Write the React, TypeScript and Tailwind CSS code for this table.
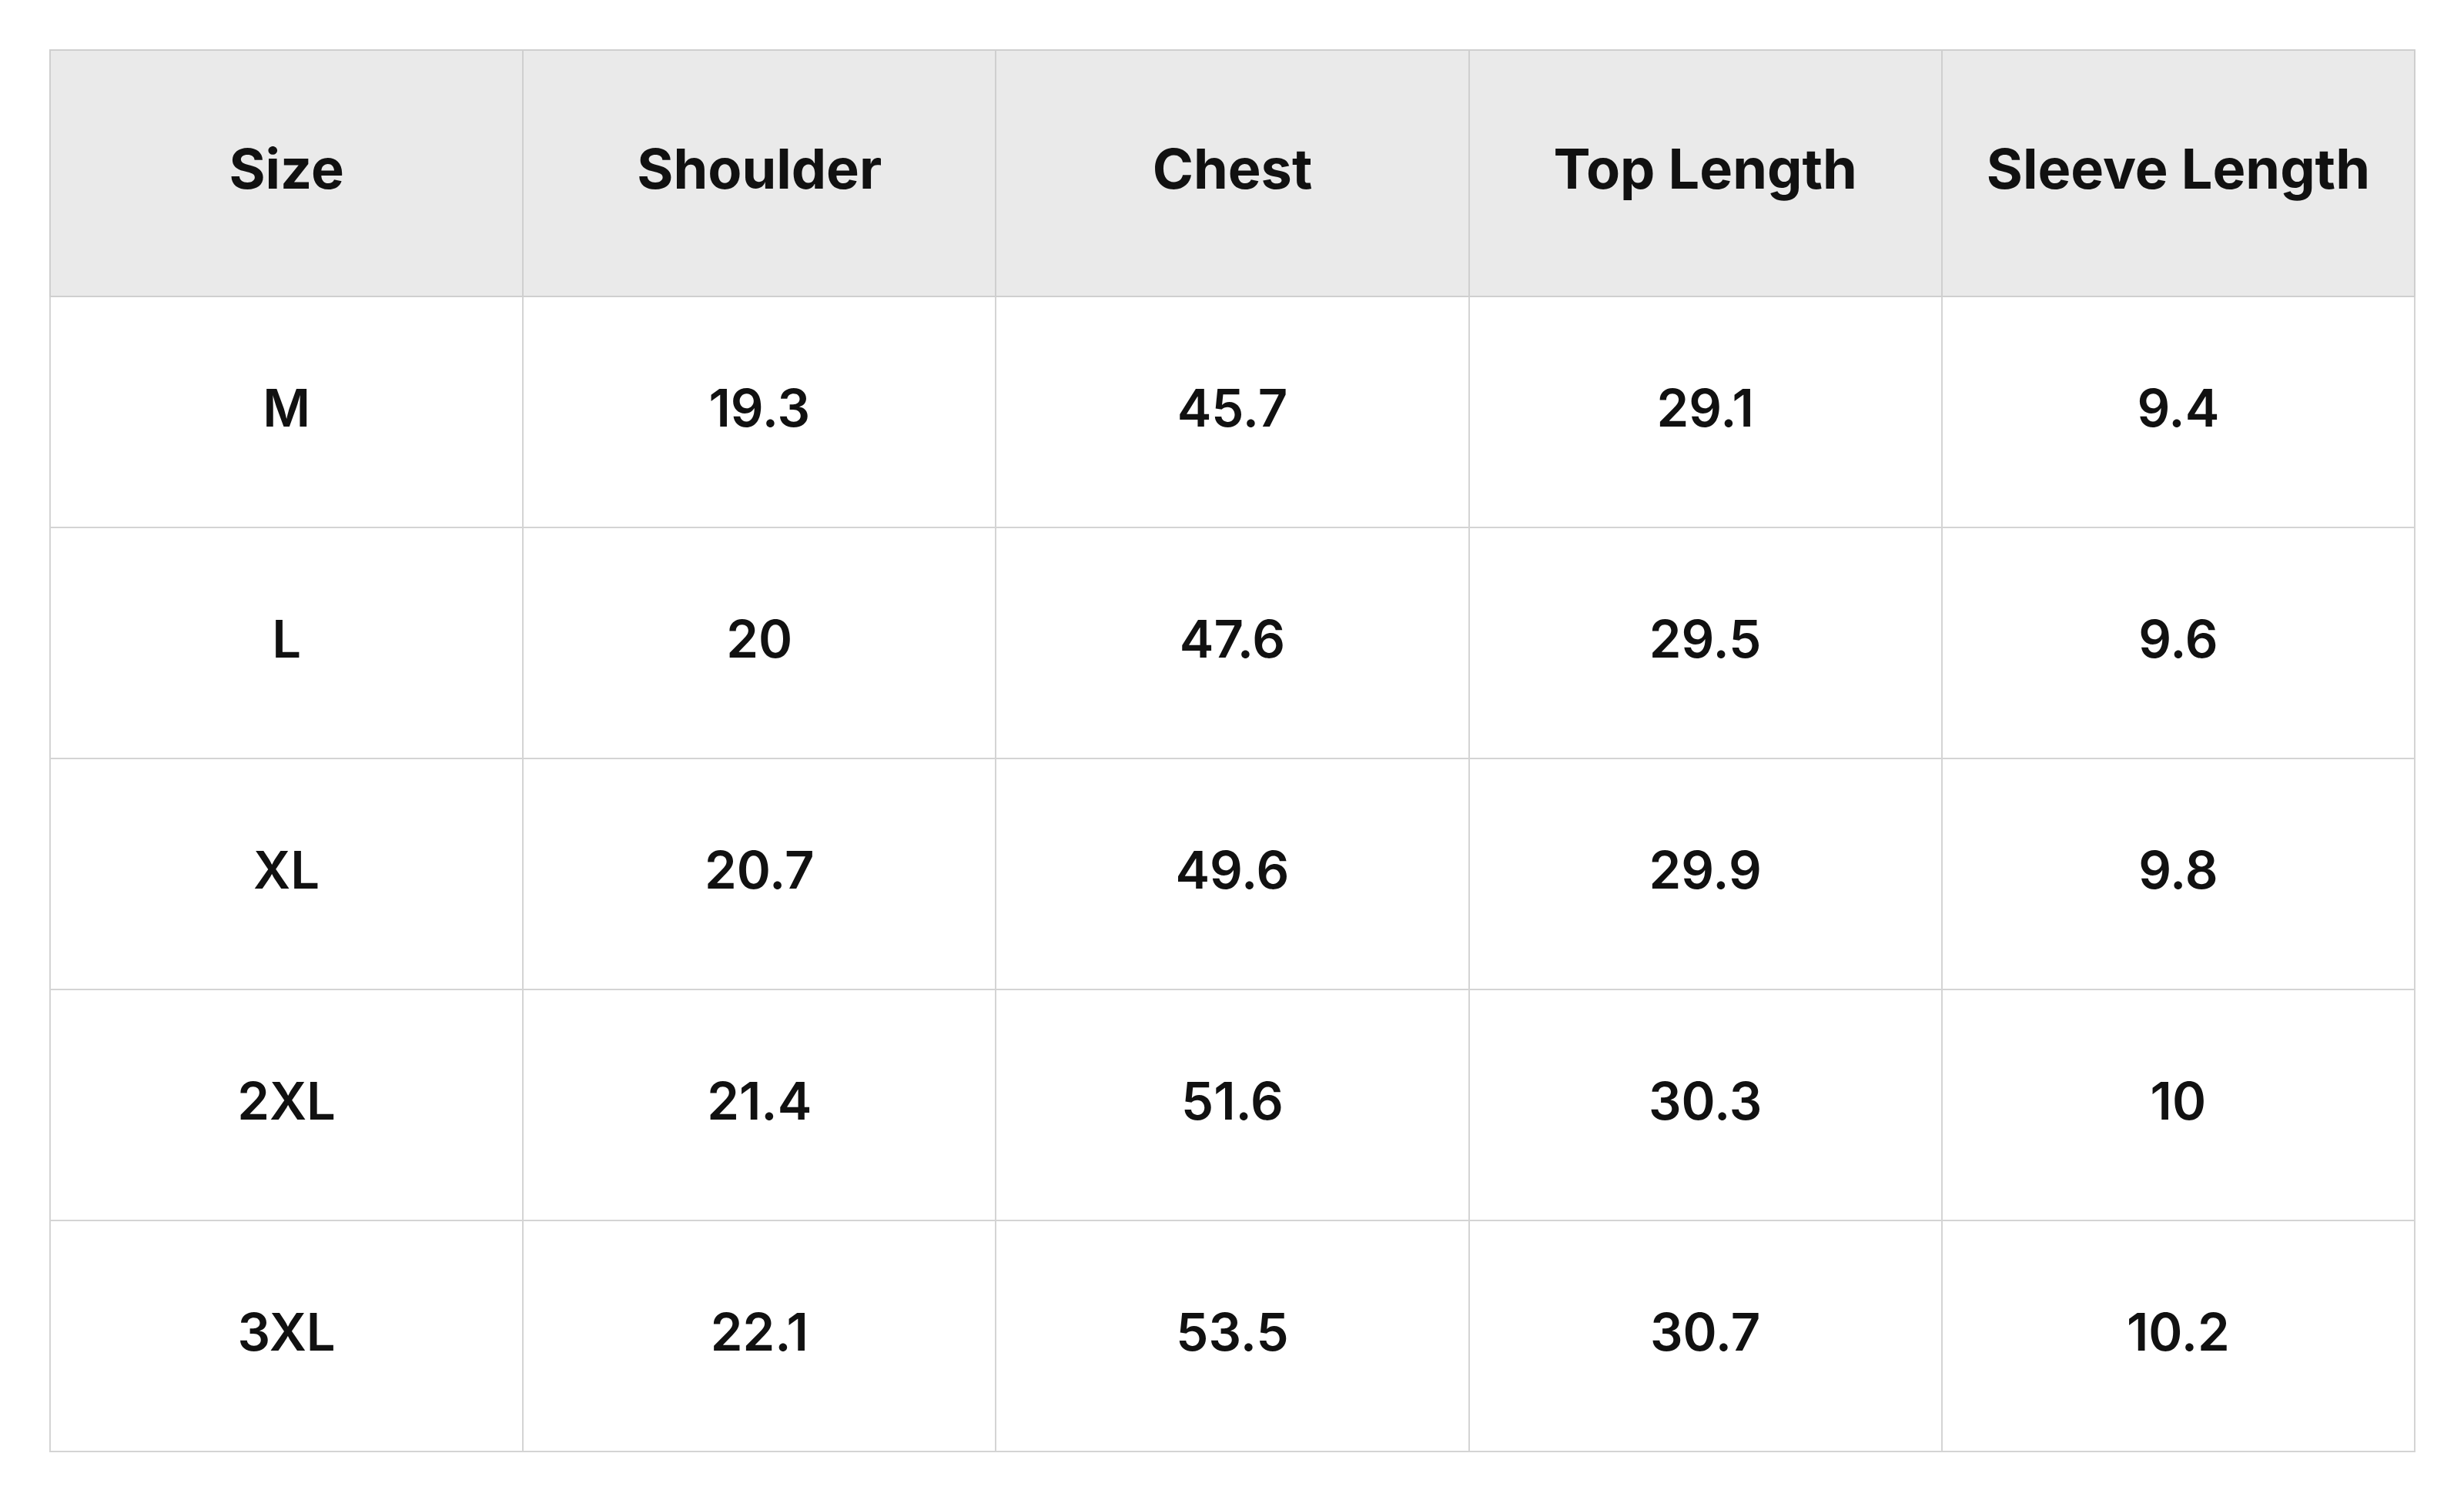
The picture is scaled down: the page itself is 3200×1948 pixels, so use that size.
import React from 'react';

const headers = ['Size', 'Shoulder', 'Chest', 'Top Length', 'Sleeve Length'];

const rows: string[][] = [
    ['M', '19.3', '45.7', '29.1', '9.4'],
    ['L', '20', '47.6', '29.5', '9.6'],
    ['XL', '20.7', '49.6', '29.9', '9.8'],
    ['2XL', '21.4', '51.6', '30.3', '10'],
    ['3XL', '22.1', '53.5', '30.7', '10.2'],
];

export default function App() {
    return (
        <div className="min-h-screen bg-white p-[64px] font-['Inter',sans-serif] text-[#111111]">
            <table className="w-[3073px] table-fixed border-collapse">
                <thead>
                    <tr className="bg-[#eaeaea]">
                        {headers.map((h) => (
                            <th
                                key={h}
                                className="h-[320px] border-2 border-[#cfcfcf] pb-[12px] text-center text-[72px] font-bold"
                            >
                                {h}
                            </th>
                        ))}
                    </tr>
                </thead>
                <tbody>
                    {rows.map((row) => (
                        <tr key={row[0]}>
                            {row.map((cell, i) => (
                                <td
                                    key={i}
                                    className="h-[300px] border-2 border-[#d4d4d4] pb-[10px] text-center text-[67px] font-semibold"
                                >
                                    {cell}
                                </td>
                            ))}
                        </tr>
                    ))}
                </tbody>
            </table>
        </div>
    );
}
